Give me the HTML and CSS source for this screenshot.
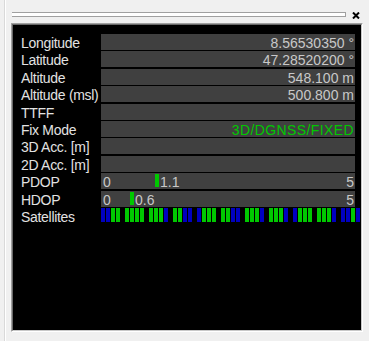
FILE: index.html
```html
<!DOCTYPE html>
<html lang="en">
<head>
    <meta charset="UTF-8">
    <title>GNSS Status</title>
    <link rel="stylesheet" href="styles.css">
</head>
<body>
    <div class="dock">
        <div class="titlebar">
            <div class="grip"></div>
            <svg class="close" width="8" height="7" viewBox="0 0 8 7">
                <path d="M1 0.5 L7 6.5 M7 0.5 L1 6.5" stroke="#000" stroke-width="2"/>
            </svg>
        </div>

        <div class="panel">
            <div class="screen">
                <div class="rows">
                    <div class="label">Longitude</div>
                    <div class="value">8.56530350 °</div>

                    <div class="label">Latitude</div>
                    <div class="value">47.28520200 °</div>

                    <div class="label">Altitude</div>
                    <div class="value">548.100 m</div>

                    <div class="label">Altitude (msl)</div>
                    <div class="value">500.800 m</div>

                    <div class="label">TTFF</div>
                    <div class="value"></div>

                    <div class="label">Fix Mode</div>
                    <div class="value green">3D/DGNSS/FIXED</div>

                    <div class="label">3D Acc. [m]</div>
                    <div class="value"></div>

                    <div class="label">2D Acc. [m]</div>
                    <div class="value"></div>

                    <div class="label">PDOP</div>
                    <div class="value scale">
                        <span>0</span>
                        <span class="mark" style="left: 54px"><i></i>1.1</span>
                        <span>5</span>
                    </div>

                    <div class="label">HDOP</div>
                    <div class="value scale">
                        <span>0</span>
                        <span class="mark" style="left: 29px"><i></i>0.6</span>
                        <span>5</span>
                    </div>

                    <div class="label">Satellites</div>
                    <div class="sats">
                        <div class="grp"><i class="b"></i><i class="b"></i><i class="g"></i><i class="g"></i></div>
                        <div class="grp"><i class="g"></i><i class="g"></i><i class="g"></i><i class="g"></i></div>
                        <div class="grp"><i class="g"></i><i class="g"></i><i class="g"></i><i class="b"></i></div>
                        <div class="grp"><i class="g"></i><i class="g"></i><i class="b"></i><i class="b"></i></div>
                        <div class="grp"><i class="b"></i><i class="g"></i><i class="g"></i><i class="g"></i></div>
                        <div class="grp"><i class="g"></i><i class="g"></i><i class="b"></i><i class="b"></i></div>
                        <div class="grp"><i class="g"></i><i class="g"></i><i class="g"></i><i class="b"></i></div>
                        <div class="grp"><i class="g"></i><i class="g"></i><i class="g"></i><i class="b"></i></div>
                        <div class="grp"><i class="b"></i><i class="g"></i><i class="g"></i><i class="g"></i></div>
                        <div class="grp"><i class="g"></i><i class="g"></i><i class="g"></i><i class="b"></i></div>
                        <div class="grp"><i class="b"></i><i class="b"></i><i class="g"></i><i class="b"></i></div>
                    </div>
                </div>
            </div>
        </div>
    </div>
</body>
</html>
```

FILE: styles.css
```css
body {
    margin: 0;
    background-color: #f0f0f0;
    font-family: "Liberation Sans", Arial, sans-serif;
}

.dock {
    margin-left: 4px;
    padding-left: 6px;
    height: 341px;
    box-sizing: border-box;
    border-left: 1px solid #d9d9d9;
    box-shadow: inset 1px 0 #fff;
}

/* docking grip + close button */
.titlebar {
    display: flex;
    align-items: flex-start;
    height: 23px;
    padding-top: 12px;
    box-sizing: border-box;
}

.grip {
    margin-left: 1px;
    width: 333px;
    height: 3px;
    background-color: #fff;
    border: 1px solid #a0a0a0;
    border-left: none;
}

.close {
    margin-left: 6px;
}

/* sunken black screen */
.panel {
    width: 352px;
    height: 309px;
    box-sizing: border-box;
    border: 1px solid;
    border-color: #a0a0a0 #fff #fff #a0a0a0;
}

.screen {
    height: 100%;
    box-sizing: border-box;
    border: 1px solid;
    border-color: #696969 #c8c8c8 #c8c8c8 #696969;
    background-color: #000;
    padding: 9px 6px 0 8px;
}

.rows {
    display: grid;
    grid-template-columns: 80px 1fr;
    grid-auto-rows: 17.4px;
}

.label {
    color: #e2e2e2;
    font-size: 14px;
    line-height: 18px;
    letter-spacing: -0.3px;
    white-space: nowrap;
}

.value {
    height: 16px;
    background-color: #404040;
    color: #c8c8c8;
    font-size: 14px;
    line-height: 18px;
    text-align: right;
    padding-right: 1px;
    white-space: nowrap;
}

.green {
    color: #00c800;
    letter-spacing: 0.4px;
}

.scale {
    position: relative;
    display: flex;
    justify-content: space-between;
    padding-left: 2px;
}

.mark {
    position: absolute;
    top: 0;
    display: flex;
    gap: 1px;
}

.mark i {
    width: 4px;
    height: 13px;
    margin-top: 1px;
    background-color: #00c800;
}

.sats {
    display: flex;
    gap: 5px;
    height: 14px;
    margin-right: -6px;
}

.grp {
    display: flex;
    gap: 1px;
}

.grp i {
    width: 4px;
}

.grp .g {
    background-color: #00c800;
}

.grp .b {
    background-color: #0000c0;
}
```
